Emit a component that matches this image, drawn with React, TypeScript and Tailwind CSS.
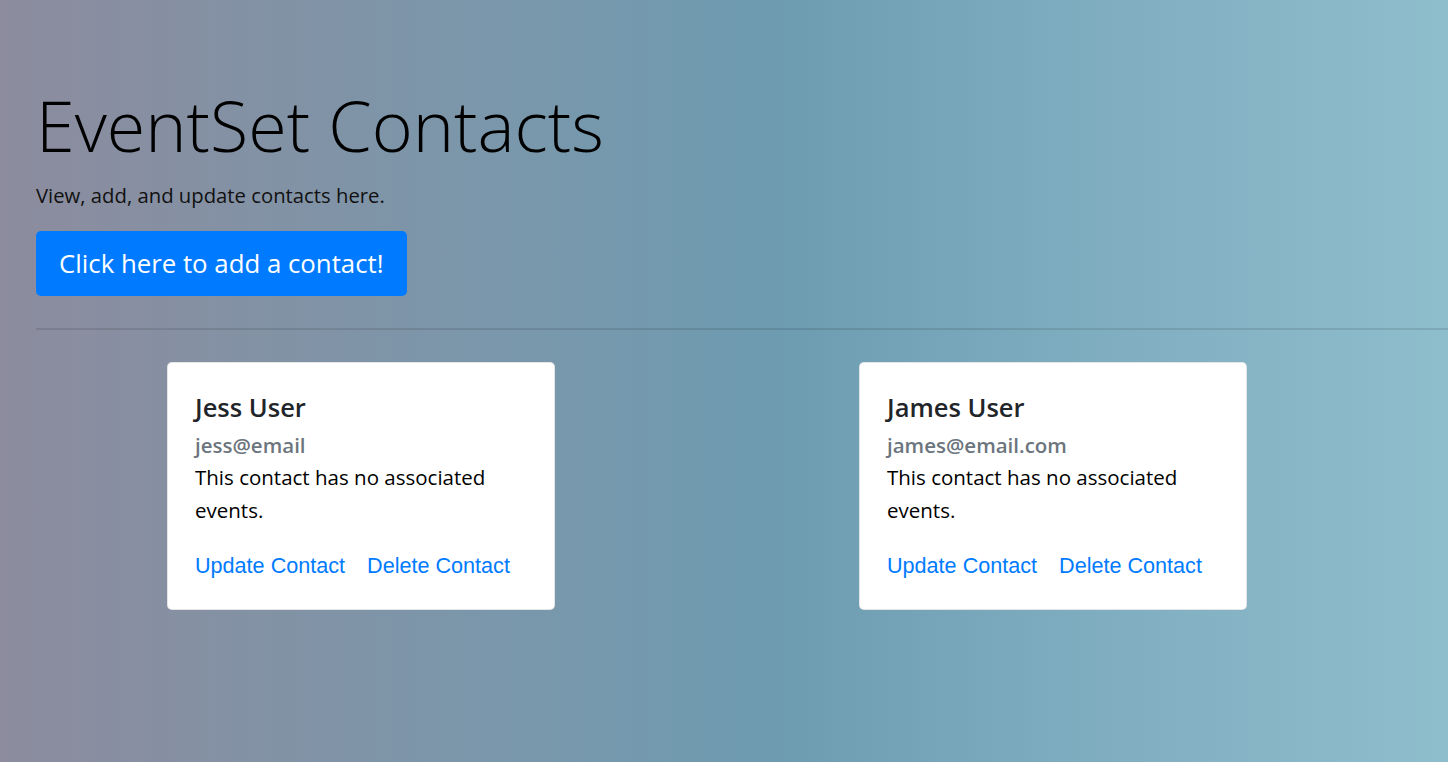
import React from "react";

const contacts = [
  { name: "Jess User", email: "jess@email" },
  { name: "James User", email: "james@email.com" },
];

function ContactCard({ name, email }: { name: string; email: string }) {
  return (
    <div className="w-[388px] rounded-[5px] border border-black/10 bg-white px-[27px] pb-[30px] pt-[28px]">
      <h5 className="text-[25.5px] font-semibold leading-[32px] text-[#212529]">{name}</h5>
      <h6 className="mt-[9px] text-[20.5px] font-semibold leading-[26px] text-[#6c757d]">{email}</h6>
      <p className="mt-[3px] text-[20.5px] leading-[33px] text-black">
        This contact has no associated events.
      </p>
      <div className="mt-[26px] flex gap-[22px] font-['Liberation_Sans',Arial,sans-serif] text-[21.6px] leading-[26px] text-[#007bff]">
        <a href="#">Update Contact</a>
        <a href="#">Delete Contact</a>
      </div>
    </div>
  );
}

export default function App() {
  return (
    <div className="min-h-[762px] bg-[linear-gradient(90deg,#8c8c9e_0%,#7a97ab_35%,#6d9bb0_54%,#7fadc0_75%,#8ebdcc_100%)] font-['Segoe_UI','Open_Sans',sans-serif]">
      <section className="pl-[36px] pt-[80px]">
        <h1 className="text-[70px] font-light leading-[90px] text-black">EventSet Contacts</h1>
        <p className="mt-[10px] text-[20.3px] leading-[30px] text-[#111]">View, add, and update contacts here.</p>
        <button className="mt-[21px] h-[65px] rounded-[5px] bg-[#007bff] px-[23px] text-[25.8px] text-white">
          Click here to add a contact!
        </button>
        <hr className="mt-[32px] border-t-[2px] border-black/10" />
      </section>
      <div className="flex gap-[304px] pl-[167px] pt-[32px]">
        {contacts.map((c) => (
          <ContactCard key={c.email} {...c} />
        ))}
      </div>
    </div>
  );
}
